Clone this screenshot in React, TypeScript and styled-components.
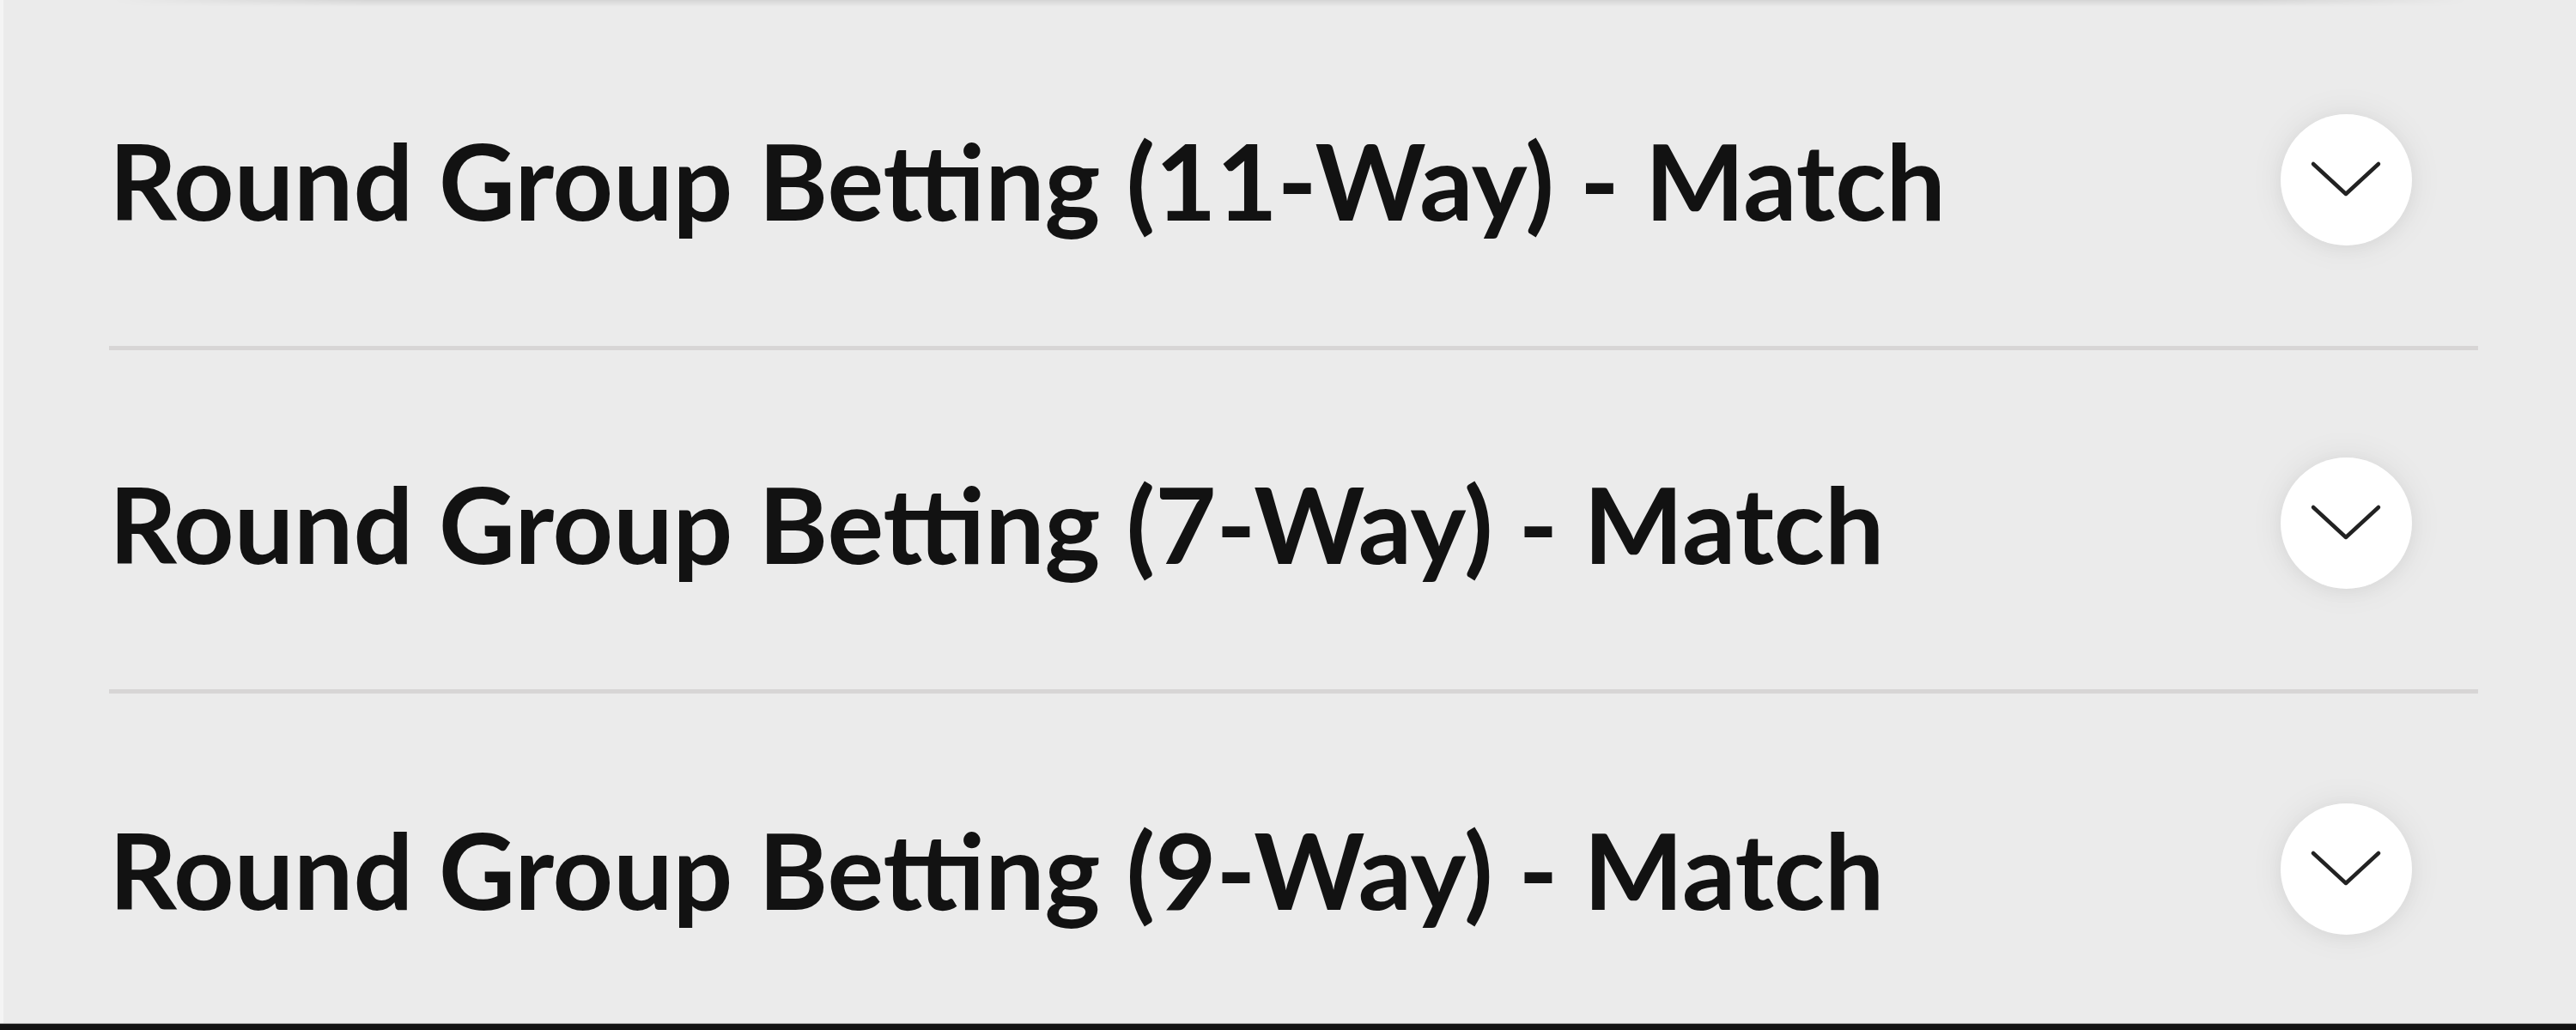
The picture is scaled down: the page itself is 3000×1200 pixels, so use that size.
import React from "react";
import styled, { createGlobalStyle } from "styled-components";

const GlobalStyle = createGlobalStyle`
  html, body {
    margin: 0;
    padding: 0;
    background: #ebebeb;
  }
  body {
    font-family: Lato, "Open Sans", sans-serif;
  }
`;

const Page = styled.div`
  display: flex;
  flex-direction: column;
  width: 3000px;
  height: 1200px;
  overflow: hidden;
  background: #ebebeb;
`;

const Body = styled.div`
  flex: 1;
  display: flex;
  min-height: 0;
`;

const LeftRail = styled.div`
  width: 4px;
  background: #f4f4f4;
`;

const Main = styled.div`
  flex: 1;
  display: flex;
  flex-direction: column;
  min-height: 0;
  overflow: hidden;
`;

const CardEdge = styled.div`
  height: 8px;
  flex-shrink: 0;
  margin: 0 126px 0 126px;
  background: linear-gradient(to bottom, rgba(0, 0, 0, 0.09), rgba(0, 0, 0, 0));
  -webkit-mask-image: linear-gradient(to right, transparent 0, #000 300px, #000 calc(100% - 250px), transparent 100%);
  mask-image: linear-gradient(to right, transparent 0, #000 300px, #000 calc(100% - 250px), transparent 100%);
`;

const List = styled.div`
  display: flex;
  flex-direction: column;
  margin: 0 114px 0 123px;
`;

const Row = styled.div<{ $last?: boolean }>`
  box-sizing: border-box;
  height: 400px;
  flex-shrink: 0;
  display: flex;
  align-items: center;
  justify-content: space-between;
  padding-top: 8px;
  border-bottom: ${(p) => (p.$last ? "none" : "5px solid #d7d5d5")};
`;

const Title = styled.div`
  font-family: Lato, "Open Sans", sans-serif;
  font-weight: 700;
  font-size: 123px;
  line-height: 1;
  color: #121212;
  white-space: nowrap;
`;

const ToggleButton = styled.button`
  width: 153px;
  height: 153px;
  margin-right: 77px;
  border: none;
  border-radius: 50%;
  padding: 0;
  background: #ffffff;
  box-shadow: 0 0 40px rgba(0, 0, 0, 0.07), 0 4px 20px rgba(0, 0, 0, 0.04);
  display: flex;
  align-items: center;
  justify-content: center;
  cursor: pointer;
`;

const FooterBar = styled.div`
  height: 7px;
  flex-shrink: 0;
  background: #121212;
  border-top: 1px solid #9a9a9a;
`;

const Chevron = () => (
  <svg width="153" height="153" viewBox="0 0 153 153" aria-hidden="true">
    <polyline
      points="38,58 76,93 114,58"
      fill="none"
      stroke="#222222"
      strokeWidth="4.5"
      strokeLinecap="round"
      strokeLinejoin="round"
    />
  </svg>
);

const markets = [
  "Round Group Betting (11-Way) - Match",
  "Round Group Betting (7-Way) - Match",
  "Round Group Betting (9-Way) - Match",
];

export default function App() {
  return (
    <>
      <GlobalStyle />
      <Page>
        <Body>
          <LeftRail />
          <Main>
            <CardEdge />
            <List>
              {markets.map((m, i) => (
                <Row key={m} $last={i === markets.length - 1}>
                  <Title>{m}</Title>
                  <ToggleButton aria-label="Expand">
                    <Chevron />
                  </ToggleButton>
                </Row>
              ))}
            </List>
          </Main>
        </Body>
        <FooterBar />
      </Page>
    </>
  );
}
